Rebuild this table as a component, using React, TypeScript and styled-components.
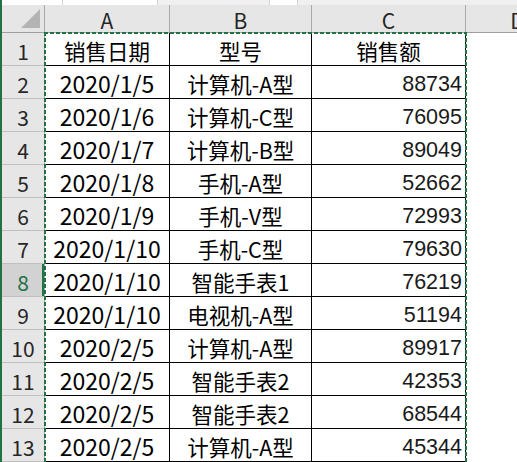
import React from "react";
import styled, { createGlobalStyle, css } from "styled-components";

const Global = createGlobalStyle`
  html, body { margin: 0; padding: 0; background: #fff; }
  #root { width: 517px; height: 462px; }
`;

const GREEN = "#217346";
const CJK = `"Noto Sans CJK SC", "Noto Sans", sans-serif`;

const Frame = styled.div`
  display: flex;
  width: 517px;
  height: 462px;
  overflow: hidden;
  background: #fff;
`;

const GreenEdge = styled.div`
  width: 2px;
  flex: none;
  background: ${GREEN};
`;

const Sheet = styled.div`
  position: relative;
  flex: 1;
  display: flex;
  flex-direction: column;
  min-width: 0;
`;

const TopStrip = styled.div`
  height: 5px;
  flex: none;
  display: flex;
  background: #f0f0f0;
`;

const StripSeg = styled.div<{ $w: number; $white?: boolean }>`
  width: ${(p) => p.$w}px;
  flex: none;
  background: ${(p) => (p.$white ? "#ffffff" : "#f0f0f0")};
  border-right: 1px solid #d4d4d4;
`;

const Grid = styled.div`
  display: grid;
  grid-template-columns: 43px 125px 142px 154px 104px;
  grid-template-rows: 28px;
  grid-auto-rows: 33px;
`;

const Corner = styled.div`
  display: flex;
  align-items: flex-end;
  justify-content: flex-end;
  padding: 0 4px 4px 0;
  background: #e6e6e6;
  border-right: 1px solid #a9a9a9;
  border-bottom: 1px solid #9e9e9e;
  box-sizing: border-box;
`;

const Triangle = styled.div`
  width: 19px;
  height: 19px;
  background: #b4b4b4;
  clip-path: polygon(100% 0, 100% 100%, 0 100%);
`;

const ColHead = styled.div`
  display: flex;
  align-items: center;
  justify-content: center;
  background: #e6e6e6;
  border-right: 1px solid #a9a9a9;
  border-bottom: 1px solid #9e9e9e;
  box-sizing: border-box;
  font-family: ${CJK};
  font-size: 21px;
  color: #262626;
  padding-top: 2px;
`;

const RowHead = styled.div<{ $active?: boolean }>`
  display: flex;
  align-items: center;
  justify-content: center;
  box-sizing: border-box;
  border-bottom: 1px solid #bfbfbf;
  border-right: 1px solid #a9a9a9;
  font-family: ${CJK};
  font-size: 21px;
  padding-top: 3px;
  ${(p) =>
    p.$active
      ? css`
          background: #d2d2d2;
          color: ${GREEN};
          box-shadow: inset -2px 0 0 ${GREEN};
        `
      : css`
          background: #e6e6e6;
          color: #262626;
        `}
`;

type Kind = "text" | "date" | "num";

const Cell = styled.div<{ $kind: Kind }>`
  display: flex;
  align-items: center;
  justify-content: ${(p) => (p.$kind === "num" ? "flex-end" : "center")};
  padding: ${(p) => (p.$kind === "num" ? "4px 3px 0 0" : "2px 0 0 0")};
  box-sizing: border-box;
  border-right: 1px solid #000;
  border-bottom: 1px solid #000;
  white-space: nowrap;
  overflow: hidden;
  font-family: ${(p) => (p.$kind === "num" ? `"Liberation Sans", Arial, sans-serif` : CJK)};
  font-size: ${(p) => (p.$kind === "date" ? "23px" : "21.5px")};
  color: ${(p) => (p.$kind === "num" ? "#1a1a1a" : "#000")};
`;

const EmptyCell = styled.div`
  background: #fff;
`;

const dash = (dir: "to right" | "to bottom") =>
  `repeating-linear-gradient(${dir}, ${GREEN} 0 4px, transparent 4px 6px)`;

const Ants = styled.div`
  position: absolute;
  left: 42px;
  top: 32px;
  width: 423px;
  height: 440px;
  pointer-events: none;
  background:
    ${dash("to right")} top left / 100% 2px no-repeat,
    ${dash("to bottom")} top left / 2px 100% no-repeat,
    ${dash("to bottom")} top right / 2px 100% no-repeat;
`;

const rows: [string, string, string][] = [
  ["销售日期", "型号", "销售额"],
  ["2020/1/5", "计算机-A型", "88734"],
  ["2020/1/6", "计算机-C型", "76095"],
  ["2020/1/7", "计算机-B型", "89049"],
  ["2020/1/8", "手机-A型", "52662"],
  ["2020/1/9", "手机-V型", "72993"],
  ["2020/1/10", "手机-C型", "79630"],
  ["2020/1/10", "智能手表1", "76219"],
  ["2020/1/10", "电视机-A型", "51194"],
  ["2020/2/5", "计算机-A型", "89917"],
  ["2020/2/5", "智能手表2", "42353"],
  ["2020/2/5", "智能手表2", "68544"],
  ["2020/2/5", "计算机-A型", "45344"],
];

export default function App() {
  return (
    <>
      <Global />
      <Frame>
        <GreenEdge />
        <Sheet>
          <TopStrip>
            <StripSeg $w={60} $white />
            <StripSeg $w={94} $white />
            <StripSeg $w={111} />
            <StripSeg $w={27} $white />
          </TopStrip>
          <Grid>
            <Corner>
              <Triangle />
            </Corner>
            <ColHead>A</ColHead>
            <ColHead>B</ColHead>
            <ColHead>C</ColHead>
            <ColHead>D</ColHead>
            {rows.map((r, i) => (
              <React.Fragment key={i}>
                <RowHead $active={i === 7}>{i + 1}</RowHead>
                <Cell $kind={i === 0 ? "text" : "date"}>{r[0]}</Cell>
                <Cell $kind="text">{r[1]}</Cell>
                <Cell $kind={i === 0 ? "text" : "num"}>{r[2]}</Cell>
                <EmptyCell />
              </React.Fragment>
            ))}
          </Grid>
          <Ants />
        </Sheet>
      </Frame>
    </>
  );
}
